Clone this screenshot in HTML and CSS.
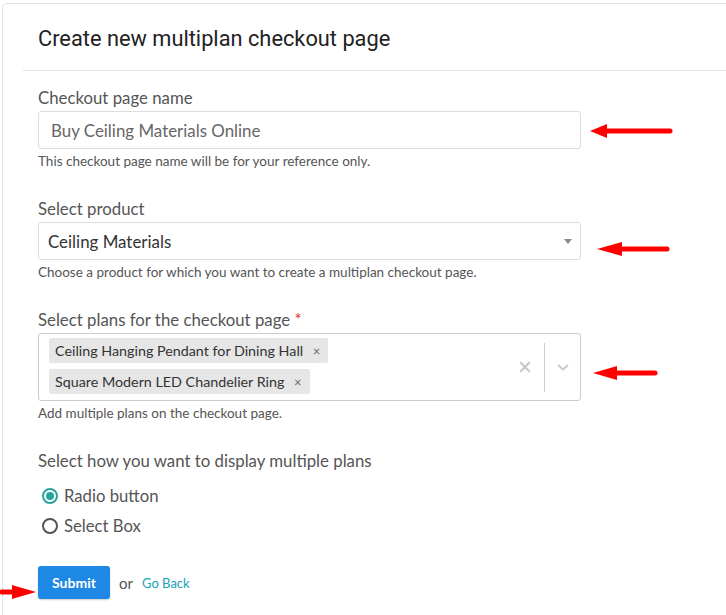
FILE: index.html
```html
<!DOCTYPE html>
<html>
<head>
<meta charset="utf-8">
<link rel="stylesheet" href="styles.css">
</head>
<body>
<div class="card">
  <div class="card-header">
    <h1 class="title">Create new multiplan checkout page</h1>
  </div>
  <div class="card-body">
    <div class="group">
      <label class="label">Checkout page name</label>
      <div class="input">Buy Ceiling Materials Online</div>
      <div class="help">This checkout page name will be for your reference only.</div>
    </div>
    <div class="group">
      <label class="label">Select product</label>
      <div class="select">
        <span class="select-text">Ceiling Materials</span>
        <span class="caret"></span>
      </div>
      <div class="help">Choose a product for which you want to create a multiplan checkout page.</div>
    </div>
    <div class="group">
      <label class="label">Select plans for the checkout page <span class="req">*</span></label>
      <div class="multi">
        <div class="tags">
          <div class="tag-row"><span class="tag">Ceiling Hanging Pendant for Dining Hall <span class="tag-x">×</span></span></div>
          <div class="tag-row"><span class="tag">Square Modern LED Chandelier Ring <span class="tag-x">×</span></span></div>
        </div>
        <div class="indicators">
          <svg class="clear" width="12" height="12" viewBox="0 0 12 12"><path d="M2 2L10 10M10 2L2 10" stroke="#c8c8c8" stroke-width="2.2" stroke-linecap="square"/></svg>
          <span class="sep"></span>
          <svg class="chev" width="14" height="10" viewBox="0 0 14 10"><path d="M2 3L7 7.5L12 3" stroke="#c8c8c8" stroke-width="2" fill="none"/></svg>
        </div>
      </div>
      <div class="help">Add multiple plans on the checkout page.</div>
    </div>
    <div class="group last">
      <label class="label">Select how you want to display multiple plans</label>
      <div class="radios">
        <div class="radio-row"><span class="radio on"></span><span class="radio-text">Radio button</span></div>
        <div class="radio-row"><span class="radio"></span><span class="radio-text">Select Box</span></div>
      </div>
    </div>
    <div class="actions">
      <button class="btn">Submit</button>
      <span class="or">or</span>
      <a class="back">Go Back</a>
    </div>
  </div>
</div>

<svg class="arrow a1" width="84" height="18" viewBox="0 0 84 18"><path d="M0 9L17 2V7H80V11H17V16Z" fill="#f00"/><path d="M17 9H80" stroke="#f00" stroke-width="5" stroke-linecap="round"/></svg>
<svg class="arrow a2" width="74" height="18" viewBox="0 0 74 18"><path d="M0 9L25 2V16Z" fill="#f00"/><path d="M20 9H70" stroke="#f00" stroke-width="5" stroke-linecap="round"/></svg>
<svg class="arrow a3" width="66" height="18" viewBox="0 0 66 18"><path d="M0 9L24 2V16Z" fill="#f00"/><path d="M20 9H62" stroke="#f00" stroke-width="5" stroke-linecap="round"/></svg>
<svg class="arrow a4" width="38" height="18" viewBox="0 0 38 18"><path d="M36 9L12 2V16Z" fill="#f00"/><path d="M2 9H16" stroke="#f00" stroke-width="5" stroke-linecap="round"/></svg>
</body>
</html>
```

FILE: styles.css
```css
html, body {
  margin: 0;
  padding: 0;
  background: #fff;
}
body {
  position: relative;
  width: 726px;
  height: 615px;
  overflow: hidden;
  font-family: Lato, "Open Sans", sans-serif;
}
.card {
  margin: 3px 0 0 2px;
  border: 1px solid #e3e3e3;
  border-right: none;
  border-bottom: none;
  border-top-left-radius: 5px;
  padding-left: 20px;
  height: 640px;
  box-sizing: border-box;
}
.card-header {
  border-bottom: 1px solid #e3e3e3;
  height: 67px;
  box-sizing: border-box;
  padding: 22px 15px 0;
}
.title {
  margin: 0;
  font-family: Roboto, sans-serif;
  font-weight: 400;
  font-size: 21.8px;
  line-height: 26px;
  color: #222;
}
.card-body {
  padding: 17px 0 0 15px;
  width: 543px;
}
.group {
  margin-bottom: 30px;
}
.group.last {
  margin-bottom: 25px;
}
.label {
  display: block;
  font-size: 16.8px;
  line-height: 20px;
  color: #555;
  margin-bottom: 3px;
}
.req {
  color: #e3342f;
}
.input, .select {
  height: 38px;
  box-sizing: border-box;
  border: 1px solid #ddd;
  border-radius: 3px;
  display: flex;
  align-items: center;
  font-size: 16.9px;
  color: #666;
  padding-left: 12px;
}
.select {
  padding-left: 9px;
  padding-right: 8px;
  color: #333;
  justify-content: space-between;
}
.caret {
  width: 0;
  height: 0;
  border-left: 4px solid transparent;
  border-right: 4px solid transparent;
  border-top: 5px solid #888;
}
.help {
  margin-top: 4px;
  font-size: 13.5px;
  line-height: 16px;
  color: #555;
}
.multi {
  border: 1px solid #ccc;
  border-radius: 3px;
  display: flex;
  justify-content: space-between;
  align-items: center;
  padding: 4px 0 6px 10px;
}
.tags {
  display: flex;
  flex-direction: column;
  gap: 6px;
}
.tag-row {
  display: flex;
}
.tag {
  background: #e6e6e6;
  border-radius: 2px;
  height: 25px;
  line-height: 25px;
  padding: 0 8px 0 6px;
  font-size: 14.3px;
  color: #333;
}
.tag-x {
  font-size: 13px;
  color: #666;
  margin-left: 6px;
}
.indicators {
  display: flex;
  align-items: center;
  height: 49px;
  margin-top: 2px;
}
.clear {
  margin-right: 13px;
}
.sep {
  width: 1px;
  height: 49px;
  background: #ccc;
}
.chev {
  margin: 0 10px 0 11px;
}
.radios {
  margin-top: 10px;
}
.radio-row {
  height: 30px;
  display: flex;
  align-items: center;
  padding-left: 4px;
}
.radio {
  width: 16px;
  height: 16px;
  box-sizing: border-box;
  border: 2px solid #555;
  border-radius: 50%;
  margin-right: 6px;
  position: relative;
}
.radio.on {
  border-color: #26a69a;
}
.radio.on::after {
  content: "";
  position: absolute;
  left: 2px;
  top: 2px;
  width: 8px;
  height: 8px;
  border-radius: 50%;
  background: #26a69a;
}
.radio-text {
  font-size: 16.7px;
  color: #555;
}
.actions {
  display: flex;
  align-items: center;
}
.btn {
  width: 72px;
  height: 33px;
  border: none;
  border-radius: 3px;
  background: #1e88e5;
  color: #fff;
  font-family: Lato, sans-serif;
  font-weight: 700;
  font-size: 14px;
  box-shadow: 0 1px 2px rgba(0,0,0,0.2);
  padding: 0;
}
.or {
  margin-left: 9px;
  font-size: 15px;
  color: #555;
}
.back {
  margin-left: 9px;
  font-size: 13px;
  color: #17a2b8;
}
.arrow {
  position: absolute;
}
.a1 { left: 590px; top: 122px; }
.a2 { left: 597px; top: 240px; }
.a3 { left: 593px; top: 364px; }
.a4 { left: 0px; top: 583px; }
```
